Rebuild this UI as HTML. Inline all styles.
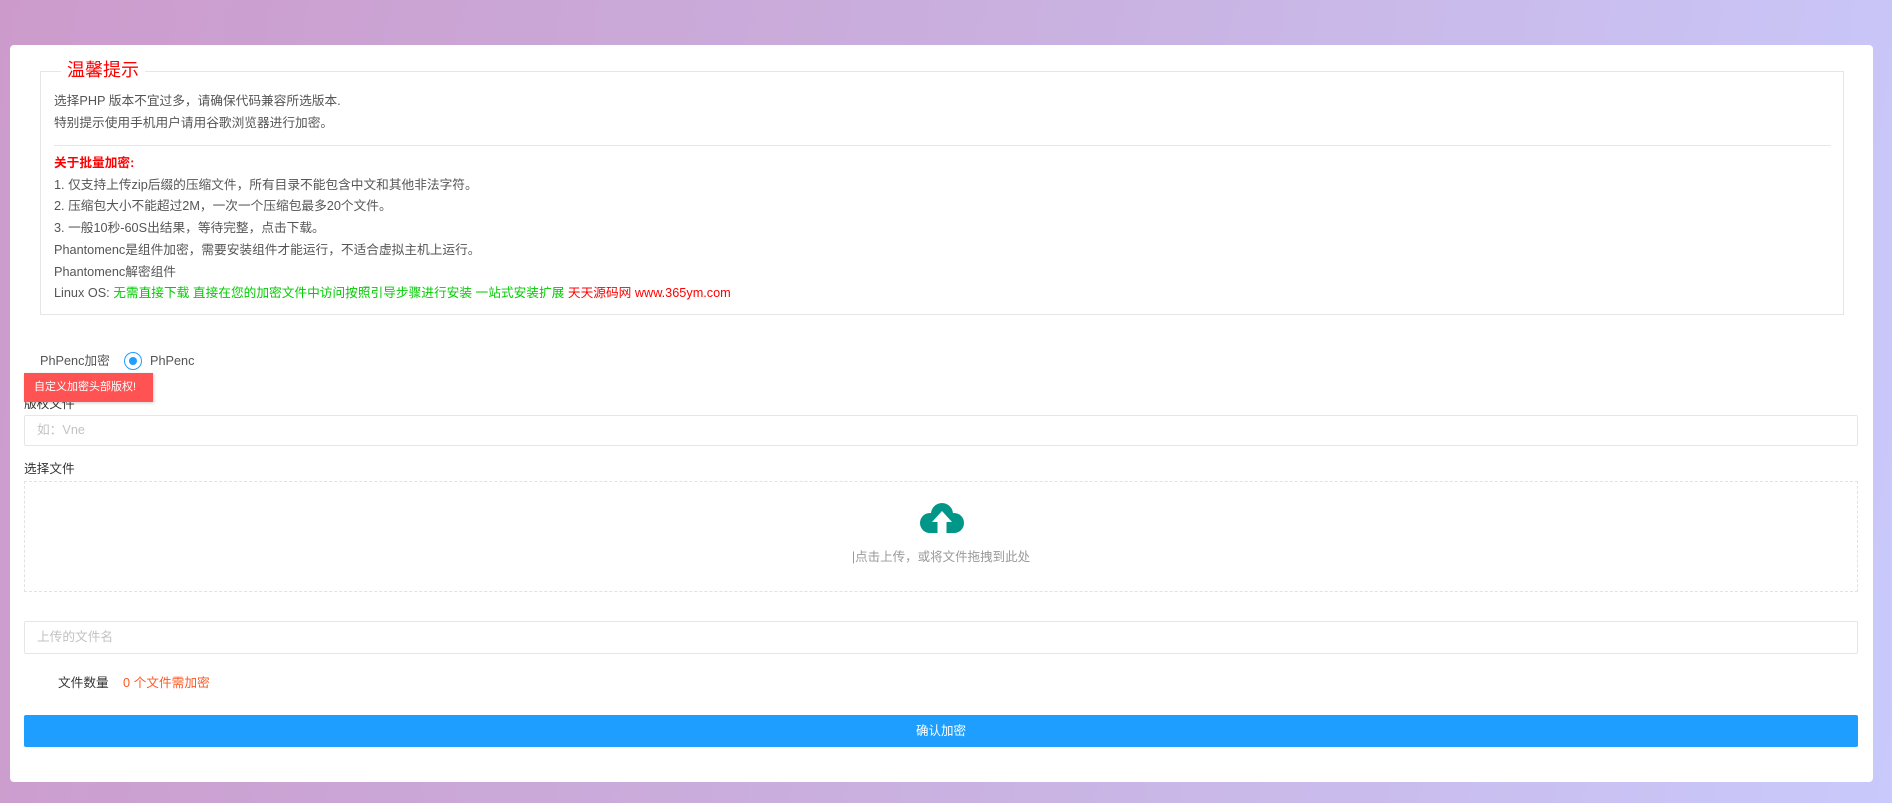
<!DOCTYPE html>
<html><head><meta charset="utf-8"><style>
*{box-sizing:border-box;margin:0;padding:0}
body{width:1892px;height:803px;overflow:hidden;background:linear-gradient(100deg,#cc9bcc 0%,#c9b0df 50%,#c9c9fb 100%);font-family:"Liberation Sans","Noto Sans CJK SC",sans-serif;font-size:12.7px;color:#555;position:relative}
.card{position:absolute;left:10px;top:45px;width:1863px;height:737px;background:#fff;border-radius:4px}
.fs{position:absolute;left:30px;top:26px;width:1804px;height:244px;border:1px solid #e6e6e6}
.lg{position:absolute;left:20px;top:-14px;background:#fff;padding:0 6px;color:#f00;font-size:18px;line-height:24px}
.t{position:absolute;left:13px;line-height:21.7px;white-space:nowrap}
.hr{position:absolute;left:13px;right:12px;top:73px;border-top:1px solid #e6e6e6}
.r{color:#f00}.g{color:#0c0}
.abs{position:absolute;white-space:nowrap}
.inp{position:absolute;left:14px;width:1834px;border:1px solid #e6e6e6;border-radius:2px;color:#c2c2c2;padding-left:12px}
</style></head><body>
<div class="card">
 <div class="fs">
  <div class="lg">温馨提示</div>
  <div class="t" style="top:19px">选择PHP 版本不宜过多，请确保代码兼容所选版本.<br>特别提示使用手机用户请用谷歌浏览器进行加密。</div>
  <div class="hr"></div>
  <div class="t" style="top:81px"><b class="r">关于批量加密:</b><br>1. 仅支持上传zip后缀的压缩文件，所有目录不能包含中文和其他非法字符。<br>2. 压缩包大小不能超过2M，一次一个压缩包最多20个文件。<br>3. 一般10秒-60S出结果，等待完整，点击下载。<br>Phantomenc是组件加密，需要安装组件才能运行，不适合虚拟主机上运行。<br>Phantomenc解密组件<br>Linux OS: <span class="g">无需直接下载 直接在您的加密文件中访问按照引导步骤进行安装 一站式安装扩展</span> <span class="r">天天源码网 www.365ym.com</span></div>
 </div>
 <div class="abs" style="left:30px;top:306px;line-height:20px">PhPenc加密</div>
 <div class="abs" style="left:114px;top:307px;width:18px;height:18px;border:1px solid #1e9fff;border-radius:50%"><div style="margin:4px;width:8px;height:8px;border-radius:50%;background:#1e9fff"></div></div>
 <div class="abs" style="left:140px;top:306px;line-height:20px">PhPenc</div>
 <div class="inp" style="top:370px;height:31px;line-height:29px">如：Vne</div>
 <div class="abs" style="left:14px;top:350px;line-height:18px;color:#333">版权文件</div>
 <div class="abs" style="left:14px;top:328px;width:129px;height:29px;background:#ff5252;color:#fff;font-size:11px;line-height:29px;padding-left:10px;box-shadow:1px 1px 3px rgba(0,0,0,.2)">自定义加密头部版权!</div>
 <div class="abs" style="left:14px;top:414px;line-height:20px;color:#333">选择文件</div>
 <div class="abs" style="left:14px;top:436px;width:1834px;height:111px;border:1px dashed #e2e2e2;text-align:center">
  <svg style="position:absolute;left:894px;top:20px" width="46" height="32" viewBox="0 0 46 32"><circle cx="23" cy="12" r="11" fill="#009688"/><circle cx="11" cy="21" r="10" fill="#009688"/><circle cx="35" cy="21" r="10" fill="#009688"/><rect x="11" y="18" width="24" height="13" fill="#009688"/><path d="M23 9 L33 20 L27.5 20 L27.5 32 L18.5 32 L18.5 20 L13 20 Z" fill="#fff"/></svg>
  <div style="position:absolute;left:0;right:0;top:64px;color:#999;font-size:12.5px">|点击上传，或将文件拖拽到此处</div>
 </div>
 <div class="inp" style="top:576px;height:33px;line-height:31px">上传的文件名</div>
 <div class="abs" style="left:48px;top:628px;line-height:20px;color:#333">文件数量</div>
 <div class="abs" style="left:113px;top:628px;line-height:20px;color:#ff5722">0 个文件需加密</div>
 <div class="abs" style="left:14px;top:670px;width:1834px;height:32px;background:#1e9fff;border-radius:2px;color:#fff;text-align:center;line-height:32px;font-size:12.5px">确认加密</div>
</div>
</body></html>
